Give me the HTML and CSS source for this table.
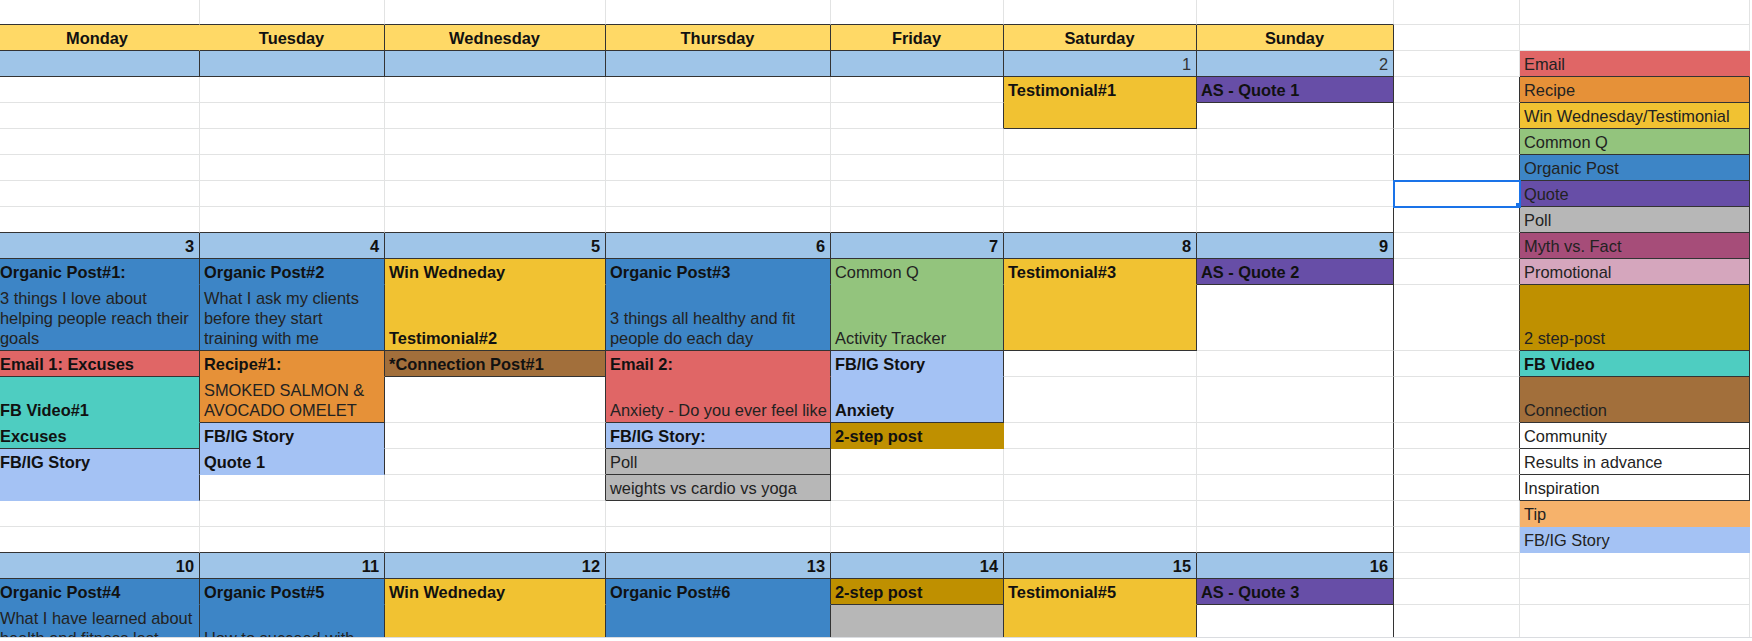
FILE: index.html
```html
<!DOCTYPE html>
<html lang="en">
<head>
<meta charset="utf-8">
<title>Content Calendar</title>
<link rel="stylesheet" href="styles.css">
</head>
<body>
<div class="sheet">
  <div class="grid">
    <!-- R0 -->
    <div class="c b"></div><div class="c b"></div><div class="c b"></div><div class="c b"></div><div class="c b"></div><div class="c b"></div><div class="c b"></div><div class="c"></div><div class="c"></div>
    <!-- R1 header -->
    <div class="c hd b">Monday</div><div class="c hd r b">Tuesday</div><div class="c hd r b">Wednesday</div><div class="c hd r b">Thursday</div><div class="c hd r b">Friday</div><div class="c hd r b">Saturday</div><div class="c hd r b">Sunday</div><div class="c"></div><div class="c"></div>
    <!-- R2 -->
    <div class="c dt r b"></div><div class="c dt r b"></div><div class="c dt r b"></div><div class="c dt r b"></div><div class="c dt r b"></div><div class="c dt reg r b">1</div><div class="c dt reg r b">2</div><div class="c"></div><div class="c red b">Email</div>
    <!-- R3 -->
    <div class="c"></div><div class="c"></div><div class="c"></div><div class="c"></div><div class="c r"></div><div class="c yel k r">Testimonial#1</div><div class="c pur k r b">AS - Quote 1</div><div class="c r"></div><div class="c org r b">Recipe</div>
    <!-- R4 -->
    <div class="c"></div><div class="c"></div><div class="c"></div><div class="c"></div><div class="c r"></div><div class="c yel r b"></div><div class="c r"></div><div class="c r"></div><div class="c yel r b">Win Wednesday/Testimonial</div>
    <!-- R5 -->
    <div class="c"></div><div class="c"></div><div class="c"></div><div class="c"></div><div class="c"></div><div class="c"></div><div class="c r"></div><div class="c r"></div><div class="c grn r b">Common Q</div>
    <!-- R6 -->
    <div class="c"></div><div class="c"></div><div class="c"></div><div class="c"></div><div class="c"></div><div class="c"></div><div class="c r"></div><div class="c r"></div><div class="c blu r b">Organic Post</div>
    <!-- R7 -->
    <div class="c"></div><div class="c"></div><div class="c"></div><div class="c"></div><div class="c"></div><div class="c"></div><div class="c r"></div><div class="c r sel"></div><div class="c pur r b">Quote</div>
    <!-- R8 -->
    <div class="c b"></div><div class="c b"></div><div class="c b"></div><div class="c b"></div><div class="c b"></div><div class="c b"></div><div class="c r b"></div><div class="c r"></div><div class="c gry r b">Poll</div>
    <!-- R9 dates -->
    <div class="c dt r b">3</div><div class="c dt r b">4</div><div class="c dt r b">5</div><div class="c dt r b">6</div><div class="c dt r b">7</div><div class="c dt r b">8</div><div class="c dt r b">9</div><div class="c r"></div><div class="c mau r b">Myth vs. Fact</div>
    <!-- R10 -->
    <div class="c blu k r">Organic Post#1:</div><div class="c blu k r">Organic Post#2</div><div class="c yel k r">Win Wedneday</div><div class="c blu k r">Organic Post#3</div><div class="c grn r">Common Q</div><div class="c yel k r">Testimonial#3</div><div class="c pur k r b">AS - Quote 2</div><div class="c r"></div><div class="c pnk r b">Promotional</div>
    <!-- R11 -->
    <div class="c blu r b">3 things I love about helping people reach their goals</div><div class="c blu r b">What I ask my clients before they start training with me</div><div class="c yel k r b">Testimonial#2</div><div class="c blu r b">3 things all healthy and fit people do each day</div><div class="c grn r b">Activity Tracker</div><div class="c yel r b"></div><div class="c r"></div><div class="c r"></div><div class="c dyl r b">2 step-post</div>
    <!-- R12 -->
    <div class="c red k r b">Email 1: Excuses</div><div class="c org k r">Recipe#1:</div><div class="c brn k r b">*Connection Post#1</div><div class="c red k r">Email 2:</div><div class="c lbl k r">FB/IG Story</div><div class="c"></div><div class="c r"></div><div class="c r"></div><div class="c tea k r b">FB Video</div>
    <!-- R13 -->
    <div class="c tea k r">FB Video#1</div><div class="c org r b">SMOKED SALMON &amp; AVOCADO OMELET</div><div class="c r"></div><div class="c red r b clip">Anxiety - Do you ever feel like</div><div class="c lbl k r b">Anxiety</div><div class="c"></div><div class="c r"></div><div class="c r"></div><div class="c brn r b">Connection</div>
    <!-- R14 -->
    <div class="c tea k r b">Excuses</div><div class="c lbl k r">FB/IG Story</div><div class="c r"></div><div class="c lbl k r b">FB/IG Story:</div><div class="c dyl k">2-step post</div><div class="c"></div><div class="c r"></div><div class="c r"></div><div class="c r b">Community</div>
    <!-- R15 -->
    <div class="c lbl k r">FB/IG Story</div><div class="c lbl k r">Quote 1</div><div class="c r"></div><div class="c gry r b">Poll</div><div class="c"></div><div class="c"></div><div class="c r"></div><div class="c r"></div><div class="c r b">Results in advance</div>
    <!-- R16 -->
    <div class="c lbl r"></div><div class="c"></div><div class="c r"></div><div class="c gry r b">weights vs cardio vs yoga</div><div class="c"></div><div class="c"></div><div class="c r"></div><div class="c r"></div><div class="c r b">Inspiration</div>
    <!-- R17 -->
    <div class="c"></div><div class="c"></div><div class="c"></div><div class="c"></div><div class="c"></div><div class="c"></div><div class="c r"></div><div class="c"></div><div class="c tip">Tip</div>
    <!-- R18 -->
    <div class="c b"></div><div class="c b"></div><div class="c b"></div><div class="c b"></div><div class="c b"></div><div class="c b"></div><div class="c r b"></div><div class="c"></div><div class="c lbl">FB/IG Story</div>
    <!-- R19 dates -->
    <div class="c dt r b">10</div><div class="c dt r b">11</div><div class="c dt r b">12</div><div class="c dt r b">13</div><div class="c dt r b">14</div><div class="c dt r b">15</div><div class="c dt r b">16</div><div class="c"></div><div class="c"></div>
    <!-- R20 -->
    <div class="c blu k r">Organic Post#4</div><div class="c blu k r">Organic Post#5</div><div class="c yel k r">Win Wedneday</div><div class="c blu k r">Organic Post#6</div><div class="c dyl k r b">2-step post</div><div class="c yel k r">Testimonial#5</div><div class="c pur k r b">AS - Quote 3</div><div class="c"></div><div class="c"></div>
    <!-- R21 -->
    <div class="c blu r">What I have learned about health and fitness last year</div><div class="c blu r">How to succeed with your goals</div><div class="c yel r"></div><div class="c blu r"></div><div class="c gry r"></div><div class="c yel r"></div><div class="c r"></div><div class="c"></div><div class="c"></div>
  </div>
</div>
</body>
</html>
```

FILE: styles.css
```css
html, body {
  margin: 0;
  padding: 0;
  background: #ffffff;
  overflow: hidden;
}

.sheet {
  width: 1752px;
  height: 637px;
  overflow: hidden;
  border-bottom: 1px solid #dadce0;
}

.grid {
  margin-left: -4px;
  display: grid;
  grid-template-columns: 204px 185px 221px 225px 173px 193px 197px 126px 230px;
  grid-template-rows: 25px 26px 26px 26px 26px 26px 26px 26px 26px 26px 26px 66px 26px 46px 26px 26px 26px 26px 26px 26px 26px 66px;
  font-family: "Liberation Sans", Arial, sans-serif;
  font-size: 16.4px;
  line-height: 20px;
  color: #222222;
}

.c {
  box-sizing: border-box;
  border-right: 1px solid #e2e3e3;
  border-bottom: 1px solid #e2e3e3;
  padding: 0 5px 2px 4px;
  display: flex;
  align-items: flex-end;
  overflow: hidden;
  min-width: 0;
}

.k { font-weight: bold; color: #111111; }
.clip { white-space: nowrap; padding-right: 0; }

/* header and date rows */
.hd {
  background: #ffd966;
  font-weight: bold;
  color: #111111;
  justify-content: center;
  border-color: transparent;
}
.dt {
  background: #9fc5e8;
  font-weight: bold;
  color: #111111;
  justify-content: flex-end;
  border-color: transparent;
}
.dt.reg { font-weight: normal; color: #333333; }

/* fills */
.blu { background: #3d85c6; border-color: transparent; }
.yel { background: #f1c232; border-color: transparent; }
.grn { background: #93c47d; border-color: transparent; }
.pur { background: #674ea7; border-color: transparent; }
.red { background: #e06666; border-color: transparent; }
.org { background: #e69138; border-color: transparent; }
.brn { background: #a26f3b; border-color: transparent; }
.lbl { background: #a4c2f4; border-color: transparent; }
.gry { background: #b7b7b7; border-color: transparent; }
.dyl { background: #bf9000; border-color: transparent; }
.tea { background: #4ecdc1; border-color: transparent; }
.mau { background: #a64d79; border-color: transparent; }
.pnk { background: #d5a6bd; border-color: transparent; }
.tip { background: #f6b26b; border-color: transparent; }

/* dark cell borders */
.r { border-right-color: #333333; }
.b { border-bottom-color: #333333; }

/* selected cell */
.sel {
  position: relative;
  outline: 2px solid #1a73e8;
  outline-offset: -1px;
}
.sel::after {
  content: "";
  position: absolute;
  right: -5px;
  bottom: -5px;
  width: 7px;
  height: 7px;
  background: #1a73e8;
  border: 1px solid #ffffff;
  z-index: 2;
}
```
